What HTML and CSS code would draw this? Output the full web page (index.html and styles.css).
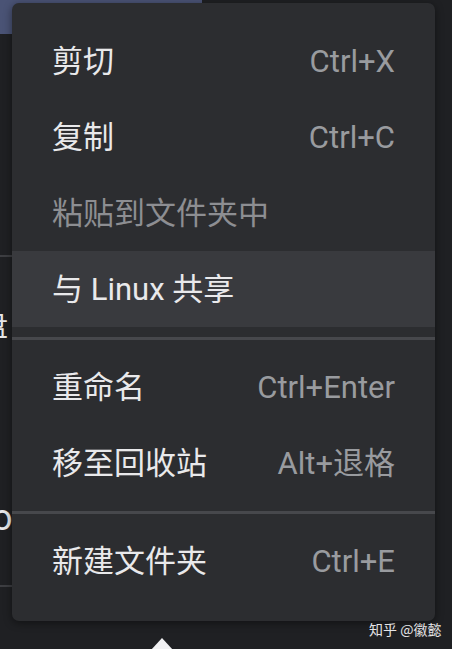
FILE: index.html
```html
<!DOCTYPE html>
<html lang="zh-CN">
<head>
<meta charset="utf-8">
<title>Context menu</title>
<link rel="stylesheet" href="styles.css">
</head>
<body>
<div class="screen">
  <aside class="sidebar">
    <div class="nav-active"></div>
    <div class="nav-rule rule-a"></div>
    <div class="nav-label label-disk">云端硬盘</div>
    <div class="nav-label label-o">o</div>
    <div class="nav-rule rule-b"></div>
  </aside>

  <div class="menu">
    <div class="item"><span class="label">剪切</span><span class="key">Ctrl+X</span></div>
    <div class="item"><span class="label">复制</span><span class="key">Ctrl+C</span></div>
    <div class="item disabled"><span class="label">粘贴到文件夹中</span></div>
    <div class="item hover"><span class="label">与 Linux 共享</span></div>
    <div class="sep"></div>
    <div class="item"><span class="label">重命名</span><span class="key">Ctrl+Enter</span></div>
    <div class="item"><span class="label">移至回收站</span><span class="key">Alt+退格</span></div>
    <div class="sep"></div>
    <div class="item"><span class="label">新建文件夹</span><span class="key">Ctrl+E</span></div>
  </div>

  <div class="pointer"></div>
  <div class="watermark">知乎 @徽懿</div>
</div>
</body>
</html>
```

FILE: styles.css
```css
html, body {
  margin: 0;
  padding: 0;
  background: #1f2023;
}

.screen {
  position: relative;
  width: 452px;
  height: 649px;
  overflow: hidden;
  background: #1f2023;
  font-family: "Roboto", "Noto Sans CJK SC", sans-serif;
}

.sidebar {
  width: 202px;
  display: flex;
  flex-direction: column;
}

.nav-active {
  height: 34px;
  background: #4a5375;
}

.nav-rule {
  height: 2px;
  background: #3d3e42;
}

.rule-a {
  margin-top: 221px;
}

.nav-label {
  color: #e8e8ea;
  font-size: 28px;
  line-height: 30px;
  white-space: nowrap;
}

.label-disk {
  margin-top: 52px;
  margin-left: -104px;
  font-family: "Noto Sans CJK SC", sans-serif;
}

.label-o {
  margin-top: 161px;
  margin-left: -8px;
  font-size: 36px;
  line-height: 36px;
}

.rule-b {
  margin-top: 49px;
}

.menu {
  position: absolute;
  left: 12px;
  top: 3px;
  width: 423px;
  box-sizing: border-box;
  padding: 20px 0 22px;
  background: #2c2d30;
  border-radius: 7px;
  box-shadow: 0 2px 8px rgba(0, 0, 0, 0.45);
  display: flex;
  flex-direction: column;
}

.item {
  height: 76px;
  padding: 0 40px;
  display: flex;
  align-items: center;
  justify-content: space-between;
  font-size: 31px;
  line-height: 1;
}

.label {
  color: #e9e9eb;
}

.key {
  color: #999b9f;
}

.item.disabled .label {
  color: #8d8e92;
}

.item.hover {
  background: #393a3e;
}

.sep {
  height: 3px;
  margin: 10px 0 9px;
  background: #47484c;
}

.pointer {
  position: absolute;
  left: 151px;
  top: 638px;
  width: 0;
  height: 0;
  border-left: 11px solid transparent;
  border-right: 11px solid transparent;
  border-bottom: 12px solid #f1f1f3;
}

.watermark {
  position: absolute;
  left: 369px;
  top: 620px;
  color: #e4e4e6;
  font-size: 14px;
  line-height: 18px;
  font-family: "Noto Sans CJK SC", sans-serif;
}
```
